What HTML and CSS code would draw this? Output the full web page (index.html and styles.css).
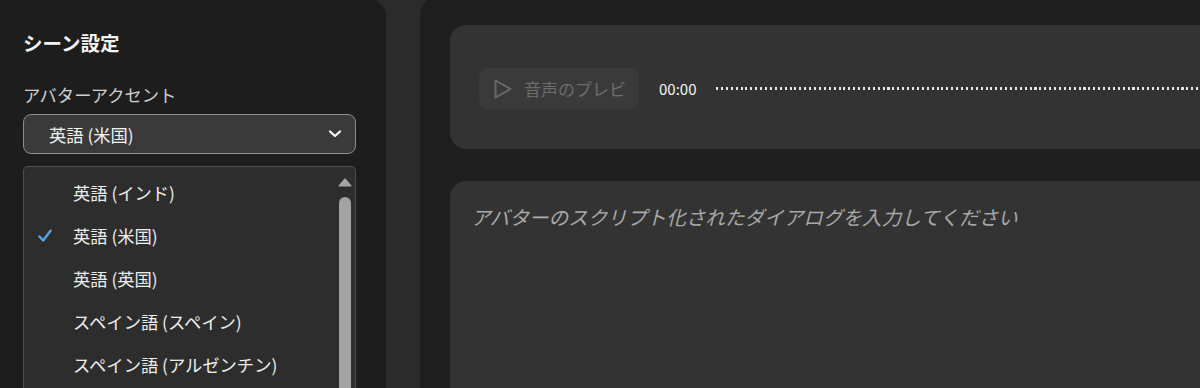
FILE: index.html
```html
<!DOCTYPE html>
<html lang="ja">
<head>
<meta charset="utf-8">
<title>シーン設定</title>
<link rel="stylesheet" href="styles.css">
</head>
<body>
<div class="app">
  <aside class="side">
    <h2 class="title">シーン設定</h2>
    <div class="label">アバターアクセント</div>
    <div class="select">
      <span class="select-value">英語 (米国)</span>
      <svg class="chev" width="14" height="10" viewBox="0 0 14 10"><path d="M2 2.5 L7 7 L12 2.5" fill="none" stroke="#fff" stroke-width="2.2" stroke-linecap="round" stroke-linejoin="round"/></svg>
    </div>
    <div class="dropdown">
      <ul class="options">
        <li class="opt"><span class="chk"></span><span>英語 (インド)</span></li>
        <li class="opt"><span class="chk"><svg width="14" height="14" viewBox="0 0 14 14"><path d="M1.5 7.5 L5.2 11.5 L12.5 1.8" fill="none" stroke="#58a6e6" stroke-width="2.4" stroke-linecap="round" stroke-linejoin="round"/></svg></span><span>英語 (米国)</span></li>
        <li class="opt"><span class="chk"></span><span>英語 (英国)</span></li>
        <li class="opt"><span class="chk"></span><span>スペイン語 (スペイン)</span></li>
        <li class="opt"><span class="chk"></span><span>スペイン語 (アルゼンチン)</span></li>
      </ul>
      <div class="scroll">
        <svg class="arrow" width="14" height="9" viewBox="0 0 14 9"><path d="M7 1 L13 8 L1 8 Z" fill="#a5a5a5" stroke="#a5a5a5" stroke-width="1.2" stroke-linejoin="round"/></svg>
        <div class="thumb"></div>
      </div>
    </div>
  </aside>
  <main class="main">
    <section class="card player">
      <button class="preview">
        <svg width="20" height="22" viewBox="0 0 20 22"><path d="M2.5 2.5 L17.5 11 L2.5 19.5 Z" fill="none" stroke="#6a6a6a" stroke-width="2" stroke-linejoin="round"/></svg>
        <span>音声のプレビ</span>
      </button>
      <span class="time">00:00</span>
      <div class="wave"></div>
    </section>
    <section class="card script">
      <p class="placeholder">アバターのスクリプト化されたダイアログを入力してください</p>
    </section>
  </main>
</div>
</body>
</html>
```
FILE: styles.css
```css
* { box-sizing: border-box; }
html, body {
  margin: 0;
  padding: 0;
  width: 1200px;
  height: 388px;
  overflow: hidden;
  background: #2b2b2b;
  font-family: "Noto Sans CJK JP", "Noto Sans", sans-serif;
  color: #fff;
}
.app {
  display: flex;
  gap: 34px;
  height: 388px;
}
.side {
  flex: 0 0 386px;
  height: 388px;
  background: #1d1d1d;
  border-top-right-radius: 15px;
  padding: 30px 30px 0 23px;
}
.title {
  margin: 0;
  font-size: 19.5px;
  line-height: 26px;
  font-weight: 700;
  color: #f4f4f4;
}
.label {
  margin-top: 27px;
  font-size: 17.3px;
  line-height: 24px;
  color: #cfcfcf;
}
.select {
  margin-top: 7px;
  width: 333px;
  height: 40px;
  border: 1px solid #8c8c8c;
  border-radius: 8px;
  background: #3a3a3a;
  display: flex;
  align-items: center;
  justify-content: space-between;
  padding: 0 13px 0 25px;
}
.select-value {
  font-size: 17.3px;
  color: #f2f2f2;
}
.chev { display: block; }
.dropdown {
  margin-top: 12px;
  width: 333px;
  height: 222px;
  border: 1px solid #4e4e4e;
  border-bottom: none;
  border-radius: 5px 5px 0 0;
  background: #2d2d2d;
  display: flex;
  padding: 4px 3px 0 0;
}
.options {
  list-style: none;
  margin: 0;
  padding: 0;
  flex: 1;
}
.opt {
  height: 43px;
  display: flex;
  align-items: center;
  font-size: 17.3px;
  color: #ededed;
}
.chk {
  flex: 0 0 49px;
  display: flex;
  align-items: center;
  padding-left: 14px;
}
.chk svg { display: block; }
.scroll {
  flex: 0 0 14px;
  display: flex;
  flex-direction: column;
  align-items: center;
  padding-top: 7px;
}
.arrow { display: block; }
.thumb {
  margin-top: 10px;
  width: 12px;
  flex: 1;
  background: #a3a3a3;
  border-radius: 6px 6px 0 0;
}
.main {
  flex: 0 0 780px;
  height: 394px;
  margin-top: -6px;
  background: #1e1e1e;
  border-top-left-radius: 22px;
  padding: 31px 0 0 30px;
}
.card {
  background: #333333;
}
.player {
  height: 124px;
  border-radius: 16px 0 0 16px;
  display: flex;
  align-items: center;
  padding-left: 29px;
}
.preview {
  width: 160px;
  height: 41px;
  border: none;
  border-radius: 8px;
  background: #3a3a3a;
  display: flex;
  align-items: center;
  gap: 11px;
  padding: 0 0 0 14px;
  margin-top: 3px;
  font-family: inherit;
  font-size: 17px;
  color: #6c6c6c;
}
.preview svg { display: block; }
.time {
  margin-left: 20px;
  margin-top: 3px;
  font-size: 15px;
  color: #f4f4f4;
}
.wave {
  margin-left: 20px;
  margin-top: 3px;
  flex: 1;
  height: 3px;
  background-image: repeating-linear-gradient(90deg, #e8e8e8 0 2px, transparent 2px 4.9px);
}
.script {
  margin-top: 32px;
  height: 207px;
  border-radius: 16px 0 0 0;
  padding: 22px 21px;
}
.placeholder {
  margin: 0;
  font-size: 19.6px;
  line-height: 28px;
  font-style: italic;
  color: #a9a9a9;
}
```
